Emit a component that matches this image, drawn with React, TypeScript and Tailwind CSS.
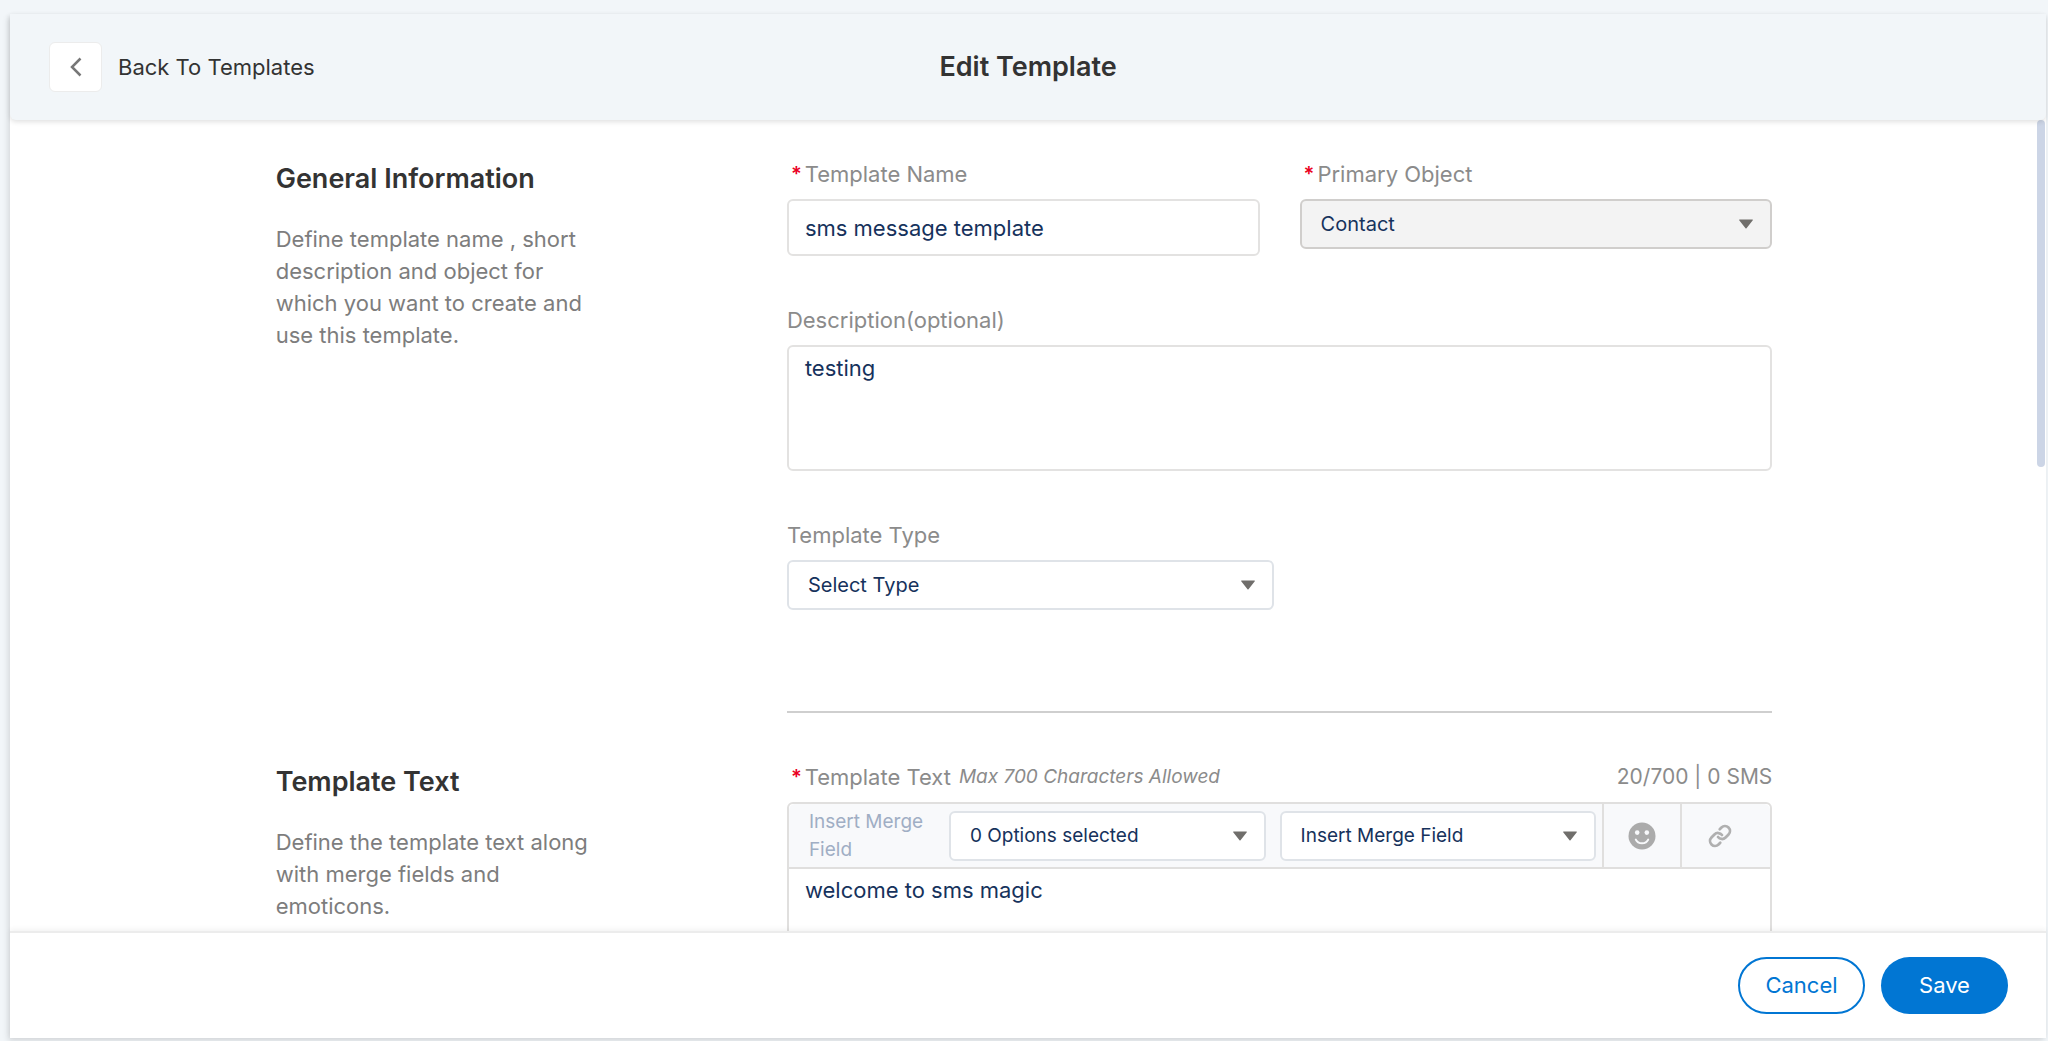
import { type ReactNode, type SelectHTMLAttributes } from "react";
import { Link } from "lucide-react";

function Required() {
  return (
    <span aria-hidden="true" className="mr-[3px] ml-1 text-[20px] font-semibold text-[#ea001e]">
      *
    </span>
  );
}

function Label({ htmlFor, required, children }: { htmlFor: string; required?: boolean; children: ReactNode }) {
  return (
    <label htmlFor={htmlFor} className="mb-[9px] flex h-8 items-center text-[22px] leading-8 text-[#8b8b8b]">
      {required && <Required />}
      {children}
    </label>
  );
}

type SelectProps = SelectHTMLAttributes<HTMLSelectElement> & { option: string; tone?: string };

function Select({ option, tone = "border-[#dfe3e8] bg-white text-[19px]", ...rest }: SelectProps) {
  return (
    <div className="relative w-full">
      <select
        {...rest}
        className={`block h-[50px] w-full appearance-none rounded-md border-2 pr-12 pl-[19px] leading-7 text-[#16325c] opacity-100 outline-none ${tone}`}
      >
        <option>{option}</option>
      </select>
      <svg
        aria-hidden="true"
        viewBox="0 0 14 10"
        className="pointer-events-none absolute top-5 right-[19px] h-[10px] w-[14px] fill-[#706e6b]"
      >
        <path d="M0.6 0.5h12.8a.5.5 0 0 1 .4.8L7.5 9.2a.6.6 0 0 1-1 0L.2 1.3A.5.5 0 0 1 .6.5Z" />
      </svg>
    </div>
  );
}

function Section({ title, text, children }: { title: string; text: string; children: ReactNode }) {
  return (
    <section className="grid grid-cols-[511fr_985fr]">
      <div>
        <h2 className="text-[27px] leading-[42px] font-semibold text-[#333]">{title}</h2>
        <p className="mt-[23px] max-w-[320px] text-[22px] leading-8 text-[#7d7d7d]">{text}</p>
      </div>
      <div>{children}</div>
    </section>
  );
}

function SmileIcon() {
  return (
    <svg aria-hidden="true" viewBox="0 0 28 28" className="size-7">
      <circle cx="14" cy="14" r="13.5" fill="#ababab" />
      <circle cx="9.2" cy="10.6" r="2.3" fill="#f8f9fb" />
      <circle cx="18.8" cy="10.6" r="2.3" fill="#f8f9fb" />
      <path d="M7.8 17.6c1.2 2.6 3.5 3.7 6.2 3.7s5-1.1 6.2-3.7" fill="none" stroke="#f8f9fb" strokeWidth="2" strokeLinecap="round" />
    </svg>
  );
}

export default function App() {
  return (
    <div className="h-screen overflow-hidden bg-[#f2f6f9] pt-[14px] pr-[2px] pb-[3px] pl-[10px] font-['Inter','Liberation_Sans',sans-serif]">
      <div className="flex h-full flex-col bg-white shadow-[-2px_3px_6px_rgba(0,0,0,0.12)]">
        <header className="relative z-10 grid h-[106px] shrink-0 grid-cols-[1fr_auto_1fr] items-center rounded-b-md bg-[#f2f6f9] px-[39px] shadow-[0_2px_5px_rgba(0,0,0,0.12)]">
          <button type="button" className="flex items-center gap-4 justify-self-start text-[22px] leading-8 text-[#333]">
            <span className="flex h-[50px] w-[53px] items-center justify-center rounded-md border border-[#ececec] bg-white">
              <svg aria-hidden="true" viewBox="0 0 12 20" className="h-5 w-3 fill-none stroke-[#777] stroke-[2.5]">
                <path d="M10.5 1.5 2 10l8.500 8.500" />
              </svg>
            </span>
            Back To Templates
          </button>
          <h1 className="text-[27px] leading-10 font-semibold text-[#333]">Edit Template</h1>
        </header>

        <div className="relative min-h-0 flex-1">
          <main className="h-full overflow-y-auto pr-2 [scrollbar-width:none]">
            <div className="mx-auto w-[73.8%] pt-[38px]">
              <Section
                title="General Information"
                text="Define template name , short description and object for which you want to create and use this template."
              >
                <div className="grid grid-cols-2 gap-10">
                  <div>
                    <Label htmlFor="name" required>
                      Template Name
                    </Label>
                    <input
                      id="name"
                      type="text"
                      defaultValue="sms message template"
                      className="block h-[57px] w-full rounded-md border-2 border-[#e3e2e1] px-4 text-[22px] text-[#16325c] outline-none"
                    />
                  </div>
                  <div>
                    <Label htmlFor="object" required>
                      Primary Object
                    </Label>
                    <Select id="object" disabled option="Contact" tone="border-[#d0cecc] bg-[#f3f3f3] text-[20px]" />
                  </div>
                </div>
                <div className="mt-12">
                  <Label htmlFor="description">Description(optional)</Label>
                  <textarea
                    id="description"
                    defaultValue="testing"
                    className="block h-[126px] w-full resize-none rounded-md border-2 border-[#e3e2e1] px-4 py-[5px] text-[22px] leading-8 text-[#16325c] outline-none"
                  />
                </div>
                <div className="mt-12 w-[487px]">
                  <Label htmlFor="type">Template Type</Label>
                  <Select id="type" option="Select Type" tone="border-[#dfe3e8] bg-white text-[20px]" />
                </div>
                <hr className="mt-[101px] mb-12 border-t-2 border-[#cfcfcf]" />
              </Section>

              <Section title="Template Text" text="Define the template text along with merge fields and emoticons.">
                <div className="flex justify-between">
                  <Label htmlFor="body" required>
                    Template Text
                    <em className="ml-2 text-[19px]">Max 700 Characters Allowed</em>
                  </Label>
                  <span className="text-[21px] leading-8 text-[#8b8b8b]">20/700 | 0 SMS</span>
                </div>
                <div className="rounded-md border-2 border-[#e0dfde]">
                  <div className="flex h-[65px] items-stretch rounded-t-md border-b-2 border-[#e0dfde] bg-[#f8f9fb]">
                    <label htmlFor="group" className="w-[160px] self-center pl-5 text-[19px] leading-7 text-[#a0aec4]">
                      Insert Merge Field
                    </label>
                    <div className="grid flex-1 grid-cols-2 items-center gap-[14px] pr-1.5">
                      <Select id="group" option="0 Options selected" />
                      <Select aria-label="Merge field" option="Insert Merge Field" />
                    </div>
                    <button type="button" aria-label="Insert emoticon" className="flex w-[78px] items-center justify-center border-l-2 border-[#e0dfde]">
                      <SmileIcon />
                    </button>
                    <button type="button" aria-label="Insert link" className="w-[90px] border-l-2 border-[#e0dfde] pl-[26px]">
                      <Link className="size-6 text-[#b0b0b0]" strokeWidth={2.75} />
                    </button>
                  </div>
                  <textarea
                    id="body"
                    defaultValue="welcome to sms magic"
                    className="block h-60 w-full resize-none px-4 py-[5px] text-[22px] leading-8 text-[#16325c] outline-none"
                  />
                </div>
              </Section>
            </div>
          </main>
          <div className="absolute top-0 right-px h-[347px] w-2 rounded-full bg-[#ccd5e6]" />
        </div>

        <footer className="relative flex h-[107px] shrink-0 items-center justify-end gap-4 border-t-2 border-[#ececec] bg-white px-[38px] shadow-[0_-2px_5px_rgba(0,0,0,0.05)]">
          <button type="button" className="h-[57px] w-[127px] rounded-full border-2 border-[#0176d3] text-[22px] text-[#0176d3]">
            Cancel
          </button>
          <button type="button" className="h-[57px] w-[127px] rounded-full bg-[#0176d3] text-[22px] text-white">
            Save
          </button>
        </footer>
      </div>
    </div>
  );
}
